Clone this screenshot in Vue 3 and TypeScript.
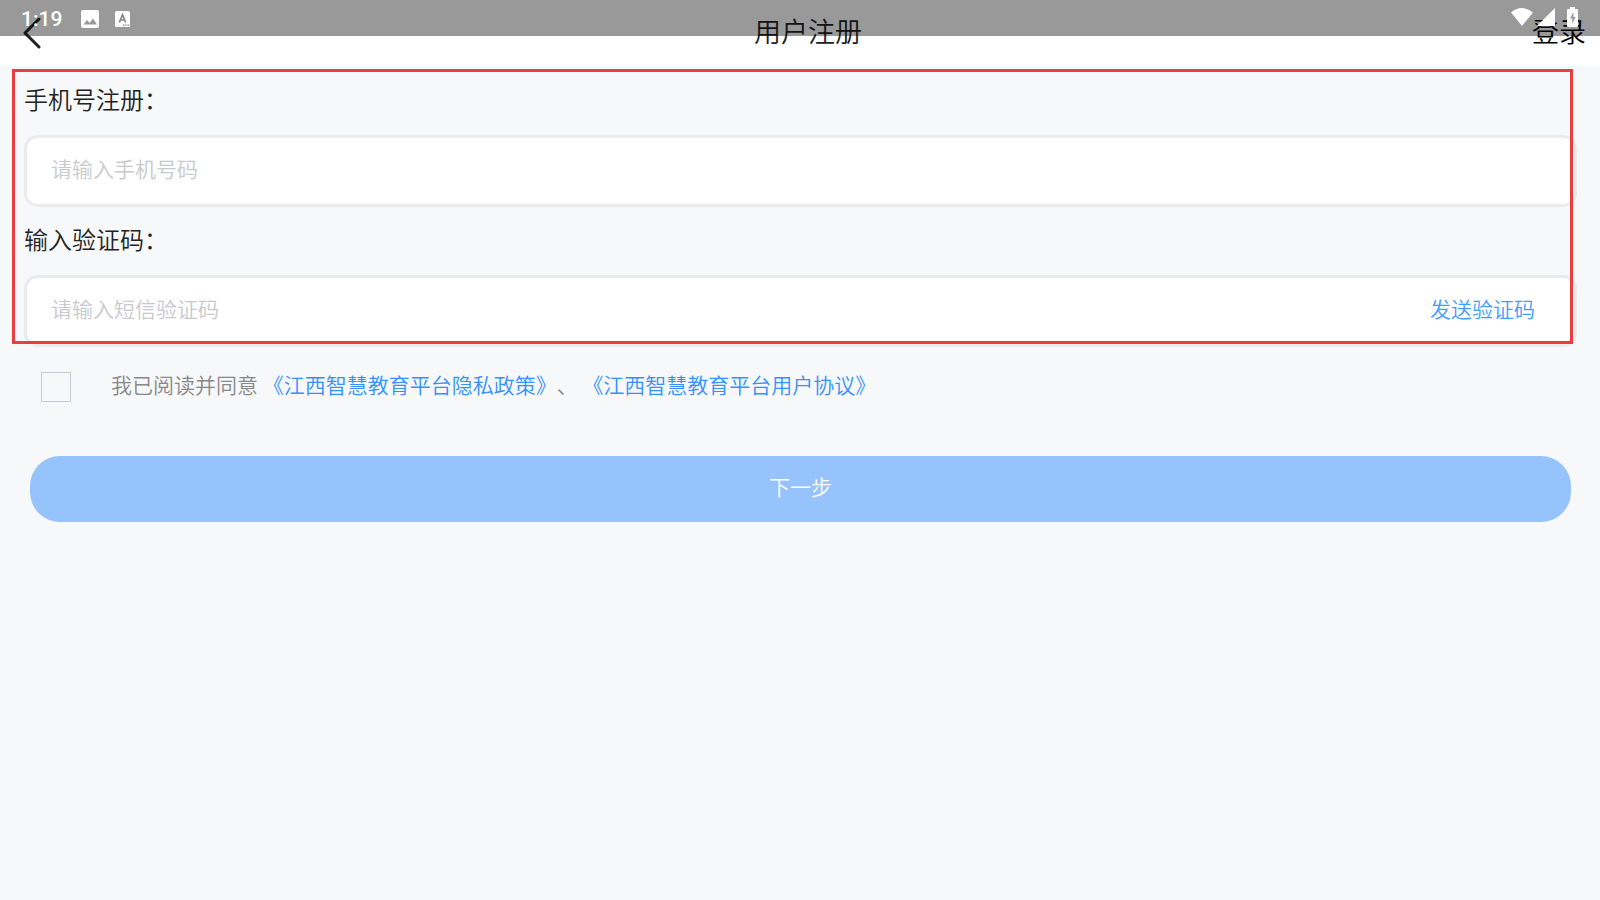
<script setup lang="ts">
import { computed, ref } from 'vue'

const phone = ref('')
const code = ref('')
const agreed = ref(false)
const time = '1:19'

const ready = computed(() => agreed.value && phone.value !== '' && code.value !== '')
</script>

<template>
  <div class="page">
    <div class="status">
      <div class="left">
        <span class="time">{{ time }}</span>
        <svg class="picture" viewBox="0 0 18 18" aria-hidden="true">
          <rect width="18" height="18" rx="2" fill="#fff" />
          <path d="M2.500 14.500 6 10l2.500 3L12 8.500l4 6z" fill="#999" />
        </svg>
        <svg class="letter" viewBox="0 0 15 16" aria-hidden="true">
          <rect width="15" height="16" rx="1.500" fill="#fff" />
          <path d="M4.300 11.500 7.500 3.800l3.200 7.700M5.500 9h4" fill="none" stroke="#888" stroke-width="1.700" />
          <path d="M8 14.200h1.300M10.300 14.200h1.300M12.600 14.200h1.300" stroke="#777" stroke-width="1.200" />
        </svg>
      </div>
      <div class="right">
        <svg class="wifi" viewBox="0 0 22 18" aria-hidden="true">
          <path d="M0 4.500Q5 0 11 0t11 4.500L11 18z" fill="#fff" />
        </svg>
        <svg class="signal" viewBox="0 0 18 18" aria-hidden="true">
          <path d="M18 0v18H0z" fill="#fff" />
        </svg>
        <svg class="battery" viewBox="0 0 11 20" aria-hidden="true">
          <path d="M3 0h5v2h2q1 0 1 1v16q0 1-1 1H1q-1 0-1-1V3q0-1 1-1h2z" fill="#fff" />
          <path d="M6.500 5 3 11.500h2.300V17L8.500 10H6.500z" fill="#999" />
        </svg>
      </div>
    </div>

    <header class="bar">
      <button class="back" type="button" aria-label="返回">
        <svg viewBox="0 0 18 32" aria-hidden="true">
          <path d="M16 2 2 16l14 14" fill="none" stroke="#222" stroke-width="3" stroke-linecap="round" stroke-linejoin="round" />
        </svg>
      </button>
      <h1>用户注册</h1>
      <a class="login" href="#login">登录</a>
    </header>

    <form @submit.prevent>
      <div class="fields">
        <label for="phone">手机号注册：</label>
        <div class="box">
          <input id="phone" v-model="phone" type="tel" placeholder="请输入手机号码" />
        </div>
        <label for="code">输入验证码：</label>
        <div class="box">
          <input id="code" v-model="code" type="text" placeholder="请输入短信验证码" />
          <button class="send" type="button">发送验证码</button>
        </div>
        <div class="frame"></div>
      </div>

      <div class="agree">
        <input id="agree" v-model="agreed" type="checkbox" />
        <p>
          <label for="agree">我已阅读并同意</label>{{ ' ' }}<a href="#privacy">《江西智慧教育平台隐私政策》</a>、 <a href="#terms">《江西智慧教育平台用户协议》</a>
        </p>
      </div>

      <button class="next" :class="{ ready }" type="submit">下一步</button>
    </form>
  </div>
</template>

<style>
body {
  margin: 0;
  background: #f7f8fa;
}
</style>

<style scoped>
.page {
  position: relative;
  min-height: 100vh;
  background: #f7f8fa;
  color: #222;
  font-family: "Noto Sans CJK SC", sans-serif;
  font-size: 21px;
  font-weight: 350;
  text-spacing-trim: space-all;
}
button,
input {
  margin: 0;
  padding: 0;
  border: 0;
  background: none;
  color: inherit;
  font: inherit;
}
a {
  text-decoration: none;
}
.status {
  position: absolute;
  inset: 0 0 auto;
  z-index: 1;
  display: flex;
  justify-content: space-between;
  box-sizing: border-box;
  height: 36px;
  padding: 0 22px 0 21px;
  background: rgba(0, 0, 0, 0.4);
  pointer-events: none;
}
.left,
.right {
  display: flex;
  align-items: center;
}
.left {
  padding-top: 2px;
}
.right {
  padding-bottom: 2px;
}
.time {
  margin-right: 19px;
  color: #fff;
  font: 500 21px/34px Roboto, sans-serif;
}
.picture {
  width: 18px;
  height: 18px;
  margin-right: 16px;
}
.letter {
  width: 15px;
  height: 16px;
}
.wifi {
  width: 22px;
  height: 18px;
}
.signal {
  width: 18px;
  height: 18px;
  margin-left: 4px;
}
.battery {
  width: 11px;
  height: 20px;
  margin-left: 12px;
}
.bar {
  display: flex;
  align-items: center;
  justify-content: space-between;
  height: 66px;
  padding-right: 14px;
  background: #fff;
}
.back {
  display: flex;
  width: 84px;
  padding-left: 23px;
}
.back svg {
  width: 18px;
  height: 32px;
}
h1,
.login {
  margin: 0;
  padding-bottom: 4px;
  font-size: 27px;
  font-weight: inherit;
  line-height: 40px;
}
.login {
  color: #000;
}
.fields {
  position: relative;
  padding: 1px 23px 0 24px;
}
.fields label {
  display: block;
  padding: 14px 0 18px;
  font-size: 24px;
  line-height: 36px;
}
.box {
  display: flex;
  align-items: center;
  box-sizing: border-box;
  height: 72px;
  padding: 0 39px 6px 24px;
  border: 3px solid #ebebeb;
  border-radius: 14px;
  background: #fff;
}
.box input {
  flex: 1;
  min-width: 0;
  height: 60px;
  outline: 0;
}
.box input::placeholder {
  color: #c8c9cc;
  opacity: 1;
}
.send {
  color: #409eff;
}
.frame {
  position: absolute;
  inset: 3px 27px 3px 12px;
  border: 3px solid #e83e40;
  pointer-events: none;
}
.agree {
  display: flex;
  align-items: flex-start;
  gap: 40px;
  padding: 25px 41px;
  color: #888;
}
.agree input {
  appearance: none;
  box-sizing: border-box;
  width: 30px;
  height: 30px;
  border: 1px solid #c8c9cc;
  background: #f7f8fa;
}
.agree input:checked {
  background: #3c94ff;
}
.agree p {
  margin: 0;
  line-height: 24px;
}
.agree a {
  color: #3490ff;
}
.next {
  display: block;
  width: calc(100% - 59px);
  height: 66px;
  margin: 29px 29px 0 30px;
  padding-bottom: 6px;
  border-radius: 30px;
  background: #97c3fd;
  color: #fff;
}
.next.ready {
  background: #3c94ff;
}
</style>
